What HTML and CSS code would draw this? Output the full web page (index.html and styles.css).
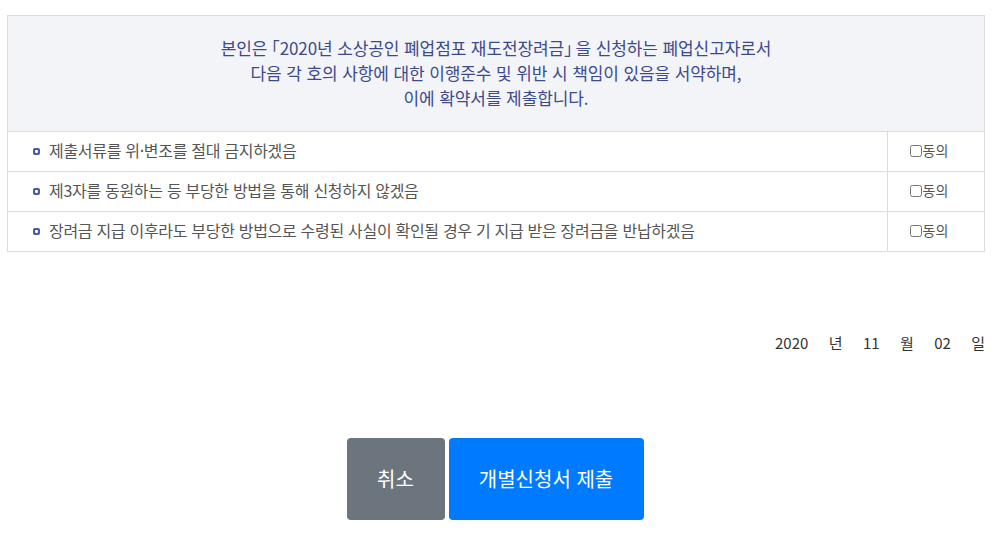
FILE: index.html
```html
<!DOCTYPE html>
<html lang="ko">
<head>
    <meta charset="UTF-8">
    <meta name="viewport" content="width=device-width,initial-scale=1.0" />
    <title>확약서</title>
    <link rel="stylesheet" href="styles.css">
</head>
<body>
  <div class="wrap">
    <table class="pledge">
      <tr>
        <th colspan="2" class="lead">
          본인은<span class="brk open">「</span>2020년 소상공인 폐업점포 재도전장려금<span class="brk close">」</span>을 신청하는 폐업신고자로서<br>
          다음 각 호의 사항에 대한 이행준수 및 위반 시 책임이 있음을 서약하며,<br>
          이에 확약서를 제출합니다.
        </th>
      </tr>
      <tr>
        <td class="item"><span class="dot"></span>제출서류를 위·변조를 절대 금지하겠음</td>
        <td class="agree"><label><input type="checkbox">동의</label></td>
      </tr>
      <tr>
        <td class="item"><span class="dot"></span>제3자를 동원하는 등 부당한 방법을 통해 신청하지 않겠음</td>
        <td class="agree"><label><input type="checkbox">동의</label></td>
      </tr>
      <tr>
        <td class="item"><span class="dot"></span>장려금 지급 이후라도 부당한 방법으로 수령된 사실이 확인될 경우 기 지급 받은 장려금을 반납하겠음</td>
        <td class="agree"><label><input type="checkbox">동의</label></td>
      </tr>
    </table>

    <div class="date">
      <span>2020</span><span>년</span><span>11</span><span>월</span><span>02</span><span>일</span>
    </div>

    <div class="btnhold">
      <div class="btn cancel">취소</div>
      <div class="btn submit">개별신청서 제출</div>
    </div>
  </div>
</body>
</html>
```

FILE: styles.css
```css
html,body,div,span,table,th,td,label,input{margin:0;padding:0;}
html,body{
  font-family: "Noto Sans CJK KR", "Noto Sans", sans-serif;
  background-color: #fff;
  color: #333;
}
.wrap{
  width: 978px;
  margin-left: 7px;
  padding-top: 15px;
}
.pledge{
  width: 100%;
  border-collapse: collapse;
  border: 1px solid #dcdcdc;
}
.pledge td,.pledge th{
  border: 1px solid #dcdcdc;
}
.lead{
  background-color: #f3f4f8;
  color: #3c4a8c;
  font-size: 17px;
  font-weight: normal;
  letter-spacing: -0.1px;
  line-height: 25px;
  height: 113px;
  padding: 0 0 2px;
  text-align: center;
}
.brk{
  font-feature-settings: "halt";
}
.brk.open{
  margin-left: 4px;
}
.brk.close{
  margin-right: 3px;
}
.item{
  height: 36px;
  padding: 0 0 3px 25px;
  font-size: 16px;
  letter-spacing: -0.3px;
  color: #555;
  text-align: left;
}
.dot{
  display: inline-block;
  width: 7px;
  height: 7px;
  border-radius: 2px;
  background: #4b58a3;
  margin-right: 9px;
  vertical-align: 2px;
  position: relative;
}
.dot:after{
  content: "";
  position: absolute;
  left: 2px;
  top: 2px;
  width: 3px;
  height: 3px;
  border-radius: 1px;
  background: #fff;
}
.agree{
  width: 82px;
  padding: 0 14px 3px 0;
  text-align: center;
  font-size: 14px;
  color: #555;
}
.agree input{
  width: 12px;
  height: 12px;
  margin: 0 1px 0 0;
  vertical-align: -1px;
}
.date{
  display: flex;
  justify-content: flex-end;
  gap: 20.4px;
  margin-top: 81px;
  font-size: 15px;
  color: #333;
  line-height: 20px;
}
.btnhold{
  display: flex;
  justify-content: center;
  gap: 4px;
  margin-top: 85px;
  padding-right: 2px;
}
.btn{
  height: 82px;
  line-height: 82px;
  border-radius: 4px;
  color: #fff;
  font-size: 20px;
  text-align: center;
}
.cancel{
  width: 98px;
  background-color: #6c757d;
}
.submit{
  width: 195px;
  background-color: #007bff;
}
```
